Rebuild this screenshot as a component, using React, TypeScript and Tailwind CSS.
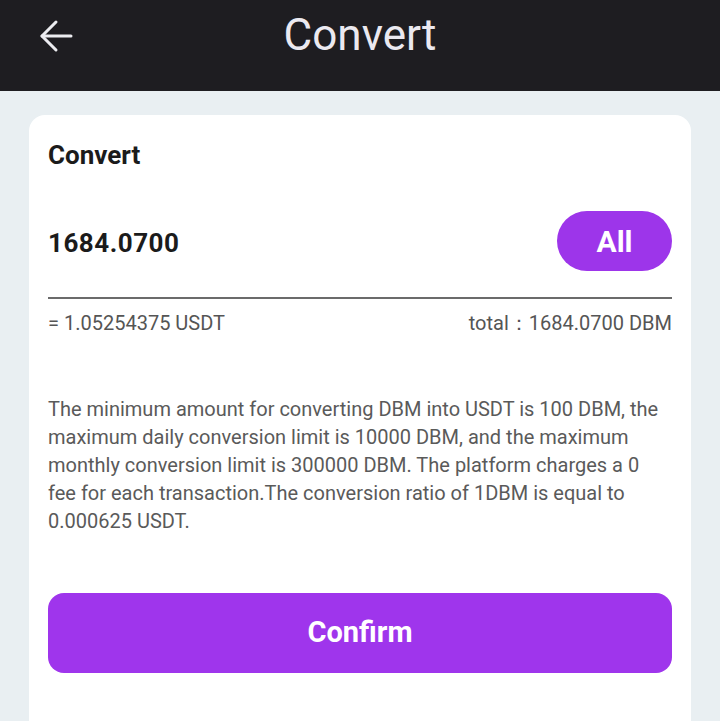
const App = () => {
  return (
    <div className="min-h-[721px] bg-[#e9eff2] font-['Roboto',sans-serif]">
      {/* Header */}
      <header className="relative flex h-[91px] items-center justify-center bg-[#1e1d21]">
        <button className="absolute left-[39px] top-[19px] text-[#ececf0]">
          <svg width="34" height="34" viewBox="0 0 34 34" fill="none" stroke="currentColor" strokeWidth="3" strokeLinecap="round" strokeLinejoin="round">
            <path d="M32 17H3" />
            <path d="M17 3 3 17l14 14" />
          </svg>
        </button>
        <h1 className="-mt-[22px] text-[44px] font-normal text-[#ebe9f0]">Convert</h1>
      </header>

      {/* Card */}
      <div className="mx-[29px] mt-[24px] min-h-[606px] rounded-t-[16px] bg-white px-[19px] pb-10">
        <h2 className="pt-[25px] text-[26px] font-bold leading-[30px] text-[#1b1b1b]">Convert</h2>

        <div className="mt-[41px] flex items-center justify-between border-b-2 border-[#6b6b6b] pb-[26px]">
          <span className="pt-[4px] text-[26px] font-bold tracking-[0.5px] text-[#1b1b1b]">1684.0700</span>
          <button className="h-[60px] w-[115px] rounded-full bg-[#9d35ea] text-[30px] font-bold text-white">
            All
          </button>
        </div>

        <div className="mt-[11px] flex justify-between text-[20px] leading-[26px] text-[#555]">
          <span>= 1.05254375 USDT</span>
          <span>total：1684.0700 DBM</span>
        </div>

        <p className="mt-[59px] text-[20px] leading-[28px] text-[#5a5a5a]">
          The minimum amount for converting DBM into USDT is 100 DBM, the maximum daily conversion
          limit is 10000 DBM, and the maximum monthly conversion limit is 300000 DBM. The platform
          charges a 0 fee for each transaction.The conversion ratio of 1DBM is equal to 0.000625 USDT.
        </p>

        <button className="mt-[58px] h-[80px] w-full rounded-[16px] bg-[#9f35ec] text-[29px] font-bold text-white">
          Confirm
        </button>
      </div>
    </div>
  );
};

export default App;
